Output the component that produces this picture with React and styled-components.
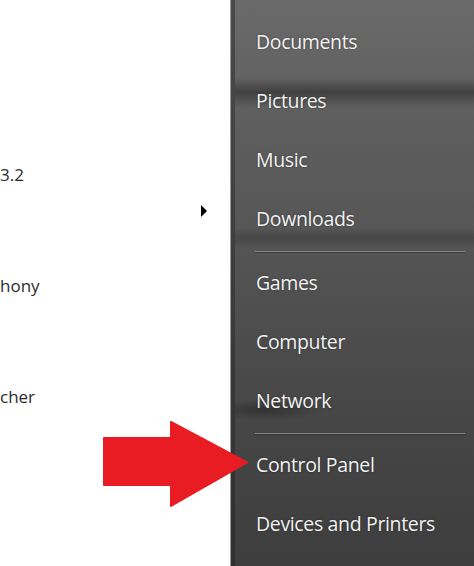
import React from "react";
import styled, { createGlobalStyle } from "styled-components";

const GlobalStyle = createGlobalStyle`
  html, body {
    margin: 0;
    padding: 0;
    background: #fff;
  }
  body {
    font-family: "Open Sans", "Noto Sans", sans-serif;
    overflow: hidden;
  }
`;

const programs = [
  { name: "3.2", arrow: true },
  { name: "hony" },
  { name: "cher" },
];

const places = [
  ["Documents", "Pictures", "Music", "Downloads"],
  ["Games", "Computer", "Network"],
  ["Control Panel", "Devices and Printers"],
];

function StartMenu() {
  return (
    <Page>
      <ProgramsPane>
        {programs.map((p) => (
          <ProgramItem key={p.name}>
            <ProgramName>{p.name}</ProgramName>
            {p.arrow && <SubArrow />}
          </ProgramItem>
        ))}
      </ProgramsPane>
      <Divider />
      <PlacesPane>
        {places.map((group, i) => (
          <React.Fragment key={i}>
            {i > 0 && <Separator />}
            {group.map((label) => (
              <PlaceItem key={label}>{label}</PlaceItem>
            ))}
          </React.Fragment>
        ))}
      </PlacesPane>
      <Pointer viewBox="0 0 146 86" aria-hidden="true">
        <path
          d="M2 17 H69 V1 L145 41.5 L69 85 V64 H2 Z"
          fill="#e91c24"
          stroke="#e91c24"
          strokeWidth="2"
          strokeLinejoin="round"
        />
      </Pointer>
    </Page>
  );
}

const Page = styled.div`
  position: relative;
  display: flex;
  width: 474px;
  height: 566px;
  overflow: hidden;
`;

const ProgramsPane = styled.div`
  display: flex;
  flex-direction: column;
  width: 230px;
  flex-shrink: 0;
  background: #fff;
  padding-top: 163px;
  box-sizing: border-box;
`;

const ProgramItem = styled.div`
  display: flex;
  align-items: flex-start;
  justify-content: space-between;
  height: 111px;
  padding-right: 23px;
`;

const ProgramName = styled.span`
  font-size: 17px;
  line-height: 24px;
  color: #2b2b2b;
`;

const SubArrow = styled.span`
  margin-top: 42px;
  width: 0;
  height: 0;
  border-top: 6px solid transparent;
  border-bottom: 6px solid transparent;
  border-left: 6px solid #000;
`;

const Divider = styled.div`
  width: 4px;
  flex-shrink: 0;
  border-left: 1px solid #9a9a9a;
  background: linear-gradient(#4a4a4a, #2f2f2f);
`;

/* blurred page content showing through the glass */
const PlacesPane = styled.div`
  display: flex;
  flex-direction: column;
  flex: 1;
  padding: 12px 9px 0 21px;
  background:
    linear-gradient(
      transparent 78px,
      rgba(38, 38, 38, 0.55) 92px,
      transparent 108px
    ),
    linear-gradient(
      transparent 228px,
      rgba(40, 40, 40, 0.3) 238px,
      transparent 248px
    ),
    radial-gradient(
      60px 10px at 30px 410px,
      rgba(30, 30, 30, 0.5),
      transparent
    ),
    linear-gradient(
      #6a6a6a 0%,
      #5f5f5f 20%,
      #565656 40%,
      #4a4a4a 65%,
      #424242 85%,
      #3e3e3e 100%
    );
`;

const PlaceItem = styled.div`
  height: 59px;
  line-height: 59px;
  font-size: 19.5px;
  color: #f3f3f3;
  letter-spacing: -0.35px;
  text-shadow: 0 0 2px rgba(0, 0, 0, 0.45);
  white-space: nowrap;
`;

const Separator = styled.div`
  height: 1px;
  margin: 3px 0 1px -1px;
  background: #858585;
  box-shadow: 0 1px 0 rgba(0, 0, 0, 0.25);
`;

const Pointer = styled.svg`
  position: absolute;
  left: 102px;
  top: 421px;
  width: 146px;
  height: 86px;
`;

export default function App() {
  return (
    <>
      <GlobalStyle />
      <StartMenu />
    </>
  );
}
